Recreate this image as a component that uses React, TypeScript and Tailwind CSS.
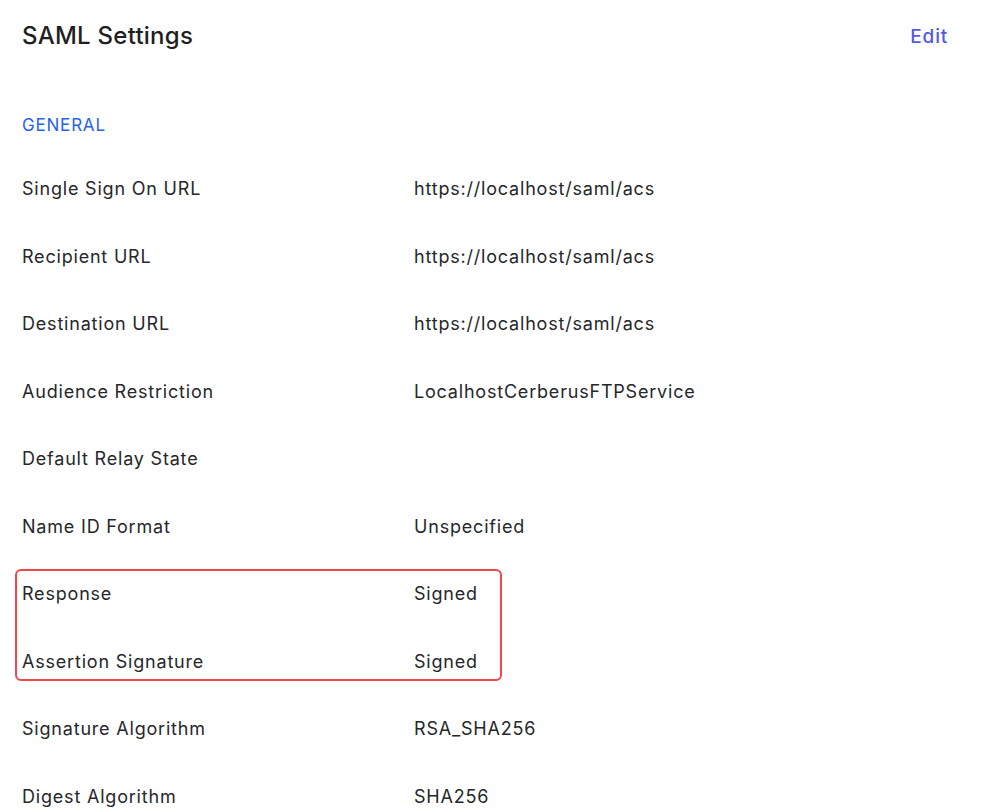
const rows: [string, string][] = [
  ['Single Sign On URL', 'https://localhost/saml/acs'],
  ['Recipient URL', 'https://localhost/saml/acs'],
  ['Destination URL', 'https://localhost/saml/acs'],
  ['Audience Restriction', 'LocalhostCerberusFTPService'],
  ['Default Relay State', ''],
  ['Name ID Format', 'Unspecified'],
];

const highlighted: [string, string][] = [
  ['Response', 'Signed'],
  ['Assertion Signature', 'Signed'],
];

const rest: [string, string][] = [
  ['Signature Algorithm', 'RSA_SHA256'],
  ['Digest Algorithm', 'SHA256'],
];

function Row({ label, value }: { label: string; value: string }) {
  return (
    <div className="flex items-center h-[67.5px]">
      <div className="w-[392px] shrink-0">{label}</div>
      <div>{value}</div>
    </div>
  );
}

export default function App() {
  return (
    <div className="min-h-screen bg-white font-['Inter',sans-serif] text-[#27272a] text-[18px] leading-[27px] tracking-[0.8px] pl-[22px] pr-[36px] overflow-hidden h-[811px]">
      <div className="flex justify-between items-center pt-[21px]">
        <h1 className="text-[24px] leading-[30px] font-medium text-[#1f1f23] tracking-[0.25px]">SAML Settings</h1>
        <button className="text-[19px] font-medium text-[#5558e0] tracking-[0.8px]">Edit</button>
      </div>

      <div className="mt-[62px] text-[17px] leading-[24px] text-[#2563eb]">GENERAL</div>

      <div className="mt-[18px]">
        {rows.map(([l, v]) => (
          <Row key={l} label={l} value={v} />
        ))}
        <div className="relative">
          {highlighted.map(([l, v]) => (
            <Row key={l} label={l} value={v} />
          ))}
          <div className="absolute left-[-7px] top-[9px] bottom-[14px] w-[487px] border-2 border-[#f0474a] rounded-[6px] pointer-events-none" />
        </div>
        {rest.map(([l, v]) => (
          <Row key={l} label={l} value={v} />
        ))}
      </div>
    </div>
  );
}
